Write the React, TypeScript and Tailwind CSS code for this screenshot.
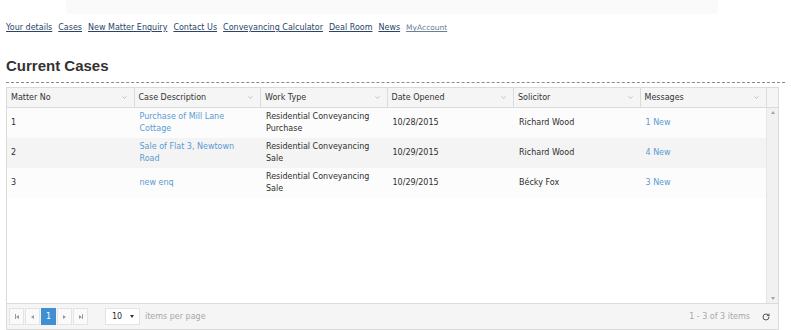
import { ChevronDown, RotateCw } from "lucide-react";

const columns = ["Matter No", "Case Description", "Work Type", "Date Opened", "Solicitor", "Messages"];

const rows = [
  { no: "1", desc: "Purchase of Mill Lane Cottage", type: "Residential Conveyancing Purchase", date: "10/28/2015", solicitor: "Richard Wood", msgs: "1 New" },
  { no: "2", desc: "Sale of Flat 3, Newtown Road", type: "Residential Conveyancing Sale", date: "10/29/2015", solicitor: "Richard Wood", msgs: "4 New" },
  { no: "3", desc: "new enq", type: "Residential Conveyancing Sale", date: "10/29/2015", solicitor: "Bécky Fox", msgs: "3 New" },
];

const navLinks = ["Your details", "Cases", "New Matter Enquiry", "Contact Us", "Conveyancing Calculator", "Deal Room", "News"];

const App = () => {
  return (
    <div className="w-[791px] h-[330px] bg-white overflow-hidden font-['DejaVu_Sans',Verdana,sans-serif] text-[8px] text-[#2e2e2e]">
      {/* Top strip */}
      <div className="ml-[66px] w-[652px] h-[14px] bg-[#fafafa]" />

      {/* Nav */}
      <div className="flex items-center gap-[6px] px-[6px] mt-[8px] h-[12px]">
        {navLinks.map((l) => (
          <a key={l} className="underline text-[#2a4566] cursor-pointer">
            {l}
          </a>
        ))}
        <a className="underline text-[#6b7f96] text-[7.5px] cursor-pointer">MyAccount</a>
      </div>

      {/* Title */}
      <div className="mx-[6px] mt-[23px] font-['Liberation_Sans',Arial,sans-serif] font-bold text-[15px] leading-[18px] text-[#333]">
        Current Cases
      </div>
      <div className="mx-[6px] mt-[7px] border-b border-dashed border-[#8a8a8a]" />

      {/* Grid */}
      <div className="mx-[6px] mt-[4px] w-[773px] h-[243px] border border-[#dbdbdb] flex flex-col">
        {/* Header */}
        <div className="flex h-[20px] bg-[#f5f5f5] border-b border-[#dbdbdb]">
          {columns.map((c, i) => (
            <div
              key={c}
              className={`flex items-center justify-between w-[126.5px] pl-[4px] pr-[6px] ${i > 0 ? "border-l border-[#dbdbdb]" : ""}`}
            >
              <span className="text-[#333]">{c}</span>
              <ChevronDown className="w-[7px] h-[7px] text-[#9a9a9a]" strokeWidth={2} />
            </div>
          ))}
          <div className="flex-1 border-l border-[#dbdbdb]" />
        </div>

        {/* Body */}
        <div className="flex flex-1 min-h-0">
          <div className="flex-1">
            {rows.map((r, i) => (
              <div key={r.no} className={`flex h-[30px] items-center leading-[12px] ${i % 2 === 1 ? "bg-[#f4f4f4]" : "bg-[#fcfcfc]"}`}>
                <div className="w-[126.5px] pl-[4px]">{r.no}</div>
                <div className="w-[126.5px] pl-[6px] pr-[10px] text-[#5b9bd1]">{r.desc}</div>
                <div className="w-[126.5px] pl-[6px] pr-[10px]">{r.type}</div>
                <div className="w-[126.5px] pl-[6px]">{r.date}</div>
                <div className="w-[126.5px] pl-[6px]">{r.solicitor}</div>
                <div className="w-[126.5px] pl-[6px] text-[#5b9bd1]">{r.msgs}</div>
              </div>
            ))}
          </div>
          {/* Scrollbar */}
          <div className="w-[13px] bg-[#f1f1f1] border-l border-[#e6e6e6] flex flex-col items-center justify-between py-[3px]">
            <span className="w-0 h-0 border-l-[2.5px] border-r-[2.5px] border-b-[3px] border-l-transparent border-r-transparent border-b-[#a3a3a3]" />
            <span className="w-0 h-0 border-l-[2.5px] border-r-[2.5px] border-t-[3px] border-l-transparent border-r-transparent border-t-[#a3a3a3]" />
          </div>
        </div>

        {/* Pager */}
        <div className="flex items-center h-[26px] bg-[#f5f5f5] border-t border-[#dbdbdb] pl-[2px] pr-[8px]">
          <div className="flex gap-[1px]">
            {["first", "prev", "1", "next", "last"].map((b) => (
              <div
                key={b}
                className={`w-[15px] h-[17px] flex items-center justify-center ${b === "1" ? "bg-[#3f8fd2] text-white" : "bg-[#fafafa] border border-[#e4e4e4] text-[#9a9a9a]"}`}
              >
                {b === "first" && (
                  <span className="flex items-center">
                    <span className="w-[1px] h-[5px] bg-[#9a9a9a]" />
                    <span className="w-0 h-0 border-t-[2.5px] border-b-[2.5px] border-r-[3px] border-t-transparent border-b-transparent border-r-[#9a9a9a]" />
                  </span>
                )}
                {b === "prev" && (
                  <span className="w-0 h-0 border-t-[2.5px] border-b-[2.5px] border-r-[3px] border-t-transparent border-b-transparent border-r-[#9a9a9a]" />
                )}
                {b === "1" && <span>1</span>}
                {b === "next" && (
                  <span className="w-0 h-0 border-t-[2.5px] border-b-[2.5px] border-l-[3px] border-t-transparent border-b-transparent border-l-[#9a9a9a]" />
                )}
                {b === "last" && (
                  <span className="flex items-center">
                    <span className="w-0 h-0 border-t-[2.5px] border-b-[2.5px] border-l-[3px] border-t-transparent border-b-transparent border-l-[#9a9a9a]" />
                    <span className="w-[1px] h-[5px] bg-[#9a9a9a]" />
                  </span>
                )}
              </div>
            ))}
          </div>
          <div className="ml-[17px] w-[35px] h-[17px] bg-white border border-[#e4e4e4] flex items-center justify-between pl-[6px] pr-[5px]">
            <span>10</span>
            <span className="w-0 h-0 border-l-[2.5px] border-r-[2.5px] border-t-[3px] border-l-transparent border-r-transparent border-t-[#333]" />
          </div>
          <span className="ml-[5px] text-[#a8a8a8]">items per page</span>
          <span className="ml-auto text-[#a8a8a8]">1 - 3 of 3 items</span>
          <RotateCw className="ml-[12px] w-[8px] h-[8px] text-[#555]" strokeWidth={3} />
        </div>
      </div>
    </div>
  );
};

export default App;
